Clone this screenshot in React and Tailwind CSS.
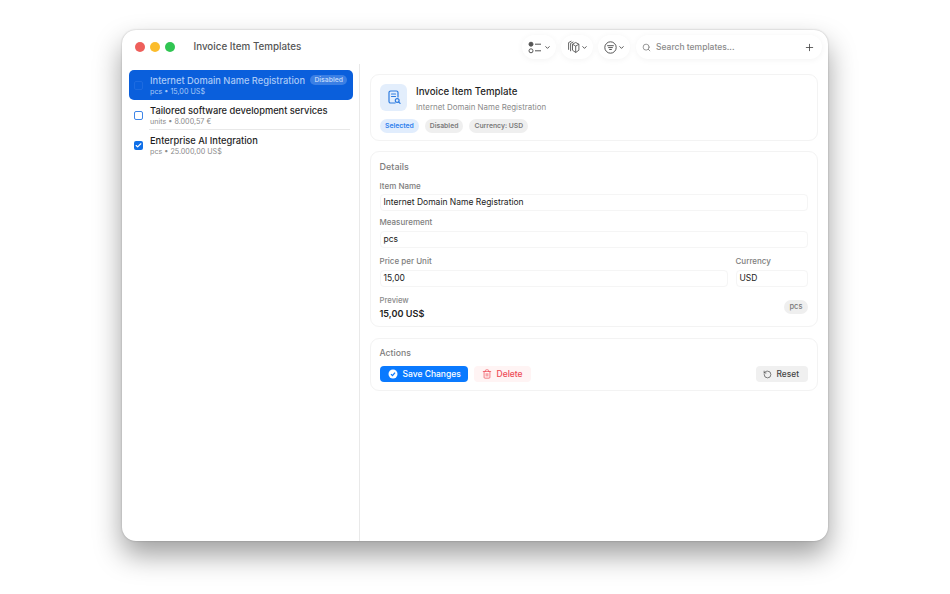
import React from 'react';
import { Check, ChevronDown, Search, Plus, Trash2, RotateCcw } from 'lucide-react';

// --- DATA ---
const items = [
    { name: 'Internet Domain Name Registration', sub: 'pcs • 15,00 US$', selected: true, disabled: true },
    { name: 'Tailored software development services', sub: 'units • 8.000,57 €' },
    { name: 'Enterprise AI Integration', sub: 'pcs • 25.000,00 US$', checked: true },
];

function ListRow({ item, last }) {
    if (item.selected) {
        return (
            <div className="h-[30px] rounded-[5px] bg-[#0a5fdc] flex items-center pl-[5px] pr-[6px]">
                <span className="w-[9px] h-[9px] rounded-[2px] border border-[#1d6be0] shrink-0" />
                <div className="ml-[7px] flex-1 min-w-0">
                    <div className="flex items-center justify-between">
                        <span className="text-[9.3px] leading-[13px] font-medium text-[#a9c9f7] whitespace-nowrap">{item.name}</span>
                        <span className="h-[10px] px-[4px] rounded-full bg-[#3b7fe4] text-[6.8px] leading-[10px] font-semibold text-[#b9d3f9]">Disabled</span>
                    </div>
                    <div className="text-[7.2px] leading-[10px] text-[#a9c9f7]">{item.sub}</div>
                </div>
            </div>
        );
    }
    return (
        <div className="h-[30px] flex items-center pl-[4.5px] pr-[3px] relative">
            {item.checked ? (
                <span className="w-[9px] h-[9px] rounded-[2px] bg-[#0f6fe8] flex items-center justify-center shrink-0">
                    <Check className="w-[7px] h-[7px] text-white" strokeWidth={4} />
                </span>
            ) : (
                <span className="w-[9px] h-[9px] rounded-[2px] border-[1.5px] border-[#3f86e8] bg-white shrink-0" />
            )}
            <div className="ml-[7.5px] flex-1 min-w-0">
                <div className="text-[9.3px] leading-[13px] font-medium text-[#1f1f1f] whitespace-nowrap">{item.name}</div>
                <div className="text-[7.2px] leading-[10px] text-[#8a8a8a]">{item.sub}</div>
            </div>
            {!last && <div className="absolute left-[20px] right-[3px] bottom-0 h-px bg-[#e8e8e8]" />}
        </div>
    );
}

function Badge({ children, blue }) {
    return (
        <span className={`h-[14px] px-[5px] rounded-full text-[6.8px] leading-[14px] font-semibold ${blue ? 'bg-[#e1edfd] text-[#2f80ed]' : 'bg-[#efefef] text-[#7a7a7a]'}`}>
            {children}
        </span>
    );
}

function Field({ label, value, className = '', tight }) {
    return (
        <div className={className}>
            <div className={`text-[8px] leading-[11px] font-medium text-[#7d7d7d] ${tight ? 'mb-[2px]' : 'mb-[3px]'}`}>{label}</div>
            <div className="h-[17px] rounded-[4px] border border-[#f5f5f5] pl-[3px] text-[8.5px] leading-[15px] text-[#222]">{value}</div>
        </div>
    );
}

function ToolButton({ children, width }) {
    return (
        <div className={`h-[24px] ${width} rounded-full bg-white flex items-center justify-center gap-[1px] shadow-[0_1px_6px_rgba(0,0,0,0.05)]`}>
            {children}
            <ChevronDown className="w-[7px] h-[7px] text-[#444]" strokeWidth={3} />
        </div>
    );
}

export default function App() {
    return (
        <div className="w-[950px] h-[594px] bg-white overflow-hidden pt-[30px] pl-[122px] font-['Inter',sans-serif]">
            <div className="w-[706px] h-[511px] rounded-[14px] bg-white flex flex-col shadow-[0_14px_28px_rgba(0,0,0,0.38),0_0_2px_rgba(0,0,0,0.25)]">
                {/* Title bar */}
                <div className="h-[34px] flex items-center pl-[13px] pr-[6px] shrink-0">
                    <span className="w-[9.5px] h-[9.5px] rounded-full bg-[#ee5f5b]" />
                    <span className="w-[9.5px] h-[9.5px] rounded-full bg-[#fbbc2c] ml-[5.5px]" />
                    <span className="w-[9.5px] h-[9.5px] rounded-full bg-[#30c552] ml-[5.5px]" />
                    <span className="ml-[19px] text-[9.8px] font-medium text-[#555]">Invoice Item Templates</span>
                    <div className="ml-auto flex items-center gap-[5px]">
                        <ToolButton width="w-[34px]">
                            <svg width="15" height="13" viewBox="0 0 15 13" fill="none" stroke="#555" strokeWidth="1">
                                <circle cx="3" cy="3.2" r="2" fill="#555" />
                                <circle cx="3" cy="9.8" r="2" />
                                <path d="M7 3.2h6M7 9.8h6" />
                            </svg>
                        </ToolButton>
                        <ToolButton width="w-[32px]">
                            <svg width="14" height="14" viewBox="0 0 14 14" fill="none" stroke="#555" strokeWidth="0.9">
                                <path d="M6.5 4.2l3.2-1.7 3.2 1.7v6l-3.2 2.3-3.2-2.3z" />
                                <path d="M6.5 4.2l3.2 1.9 3.2-1.9M9.7 6.1v6.4" />
                                <path d="M4.6 11.2V3.4L7.4 1.9M2.6 9.8V2.6L5.4 1.1" />
                            </svg>
                        </ToolButton>
                        <ToolButton width="w-[32px]">
                            <svg width="13" height="13" viewBox="0 0 13 13" fill="none" stroke="#555" strokeWidth="1">
                                <circle cx="6.5" cy="6.5" r="5.7" />
                                <path d="M3.2 4.7h6.6M4.2 6.6h4.6M5.2 8.5h2.6" />
                            </svg>
                        </ToolButton>
                    </div>
                    <div className="ml-[6px] w-[186px] h-[24px] rounded-full bg-white flex items-center pl-[6px] pr-[7px] shadow-[0_1px_6px_rgba(0,0,0,0.05)]">
                        <Search className="w-[9px] h-[9px] text-[#777]" strokeWidth={2} />
                        <span className="ml-[5px] text-[8.5px] font-medium text-[#8a8a8a]">Search templates...</span>
                        <Plus className="ml-auto w-[11px] h-[11px] text-[#444]" strokeWidth={1.8} />
                    </div>
                </div>

                <div className="flex-1 flex min-h-0">
                    {/* Sidebar */}
                    <div className="w-[238px] border-r border-[#e9e9e9] pl-[7px] pr-[6px] pt-[6px] shrink-0">
                        {items.map((item, i) => (
                            <ListRow key={item.name} item={item} last={i === items.length - 1} />
                        ))}
                    </div>

                    {/* Detail */}
                    <div className="flex-1 pl-[10px] pr-[10px] pt-[10px]">
                        <div className="h-[67px] rounded-[9px] border border-[#f3f3f3] pl-[9px] pt-[9px]">
                            <div className="flex items-start">
                                <div className="w-[27px] h-[27px] rounded-[6px] bg-[#e3eefc] flex items-center justify-center">
                                    <svg width="14" height="15" viewBox="0 0 14 15" fill="none" stroke="#2f7de0" strokeWidth="1.2" strokeLinecap="round">
                                        <path d="M8 13H3.6A1.6 1.6 0 0 1 2 11.4V2.6A1.6 1.6 0 0 1 3.6 1h5.8A1.6 1.6 0 0 1 11 2.6V7" />
                                        <path d="M4.5 4h4M4.5 6.5h4" />
                                        <circle cx="10.2" cy="10.5" r="1.9" />
                                        <path d="M11.7 12l1.4 1.4" />
                                    </svg>
                                </div>
                                <div className="ml-[9px] mt-[1px]">
                                    <div className="text-[9.7px] leading-[13px] font-medium text-[#1f1f1f]">Invoice Item Template</div>
                                    <div className="text-[7.9px] leading-[11px] mt-[4px] text-[#8a8a8a]">Internet Domain Name Registration</div>
                                </div>
                            </div>
                            <div className="flex gap-[6px] mt-[6px]">
                                <Badge blue>Selected</Badge>
                                <Badge>Disabled</Badge>
                                <Badge>Currency: USD</Badge>
                            </div>
                        </div>

                        <div className="mt-[10px] h-[176px] rounded-[9px] border border-[#f3f3f3] pl-[8.5px] pr-[9.5px] pt-[9px]">
                            <div className="text-[9px] leading-[12px] font-medium text-[#7d7d7d]">Details</div>
                            <Field className="mt-[8px]" label="Item Name" value="Internet Domain Name Registration" tight />
                            <Field className="mt-[6px]" label="Measurement" value="pcs" />
                            <div className="flex gap-[8px] mt-[8px]">
                                <Field className="flex-1" label="Price per Unit" value="15,00" />
                                <Field className="w-[72px]" label="Currency" value="USD" />
                            </div>
                            <div className="flex items-center justify-between mt-[9px]">
                                <div>
                                    <div className="text-[7.7px] leading-[10px] font-medium text-[#8a8a8a]">Preview</div>
                                    <div className="text-[9.1px] leading-[14px] mt-[1px] font-semibold text-[#222]">15,00 US$</div>
                                </div>
                                <span className="h-[14px] px-[5px] rounded-full bg-[#efefef] text-[7.5px] leading-[14px] font-medium text-[#7a7a7a] mb-[3px]">pcs</span>
                            </div>
                        </div>

                        <div className="mt-[11px] h-[53px] rounded-[9px] border border-[#f3f3f3] pl-[8.5px] pr-[9.5px] pt-[8px]">
                            <div className="text-[8.7px] leading-[12px] font-medium text-[#7d7d7d]">Actions</div>
                            <div className="flex items-center mt-[7px]">
                                <div className="h-[16px] w-[88px] rounded-[4px] bg-[#0a7aff] flex items-center pl-[8px]">
                                    <svg width="10" height="10" viewBox="0 0 10 10" className="shrink-0">
                                        <circle cx="5" cy="5" r="4.5" fill="#fff" />
                                        <path d="M3 5.1l1.5 1.5L7 3.6" fill="none" stroke="#0a7aff" strokeWidth="1.3" />
                                    </svg>
                                    <span className="ml-[5px] text-[8.5px] font-medium text-white whitespace-nowrap">Save Changes</span>
                                </div>
                                <div className="ml-[6px] h-[16px] w-[57px] rounded-[4px] bg-[#fff4f4] flex items-center pl-[8px]">
                                    <Trash2 className="w-[10px] h-[10px] text-[#ee4a55]" strokeWidth={1.7} />
                                    <span className="ml-[5px] text-[8.5px] font-medium text-[#ee4a55]">Delete</span>
                                </div>
                                <div className="ml-auto h-[16px] w-[52px] rounded-[4px] bg-[#f0f0f0] flex items-center pl-[7px]">
                                    <RotateCcw className="w-[9px] h-[9px] text-[#444]" strokeWidth={1.8} />
                                    <span className="ml-[5px] text-[8.4px] font-medium text-[#444]">Reset</span>
                                </div>
                            </div>
                        </div>
                    </div>
                </div>
            </div>
        </div>
    );
}
